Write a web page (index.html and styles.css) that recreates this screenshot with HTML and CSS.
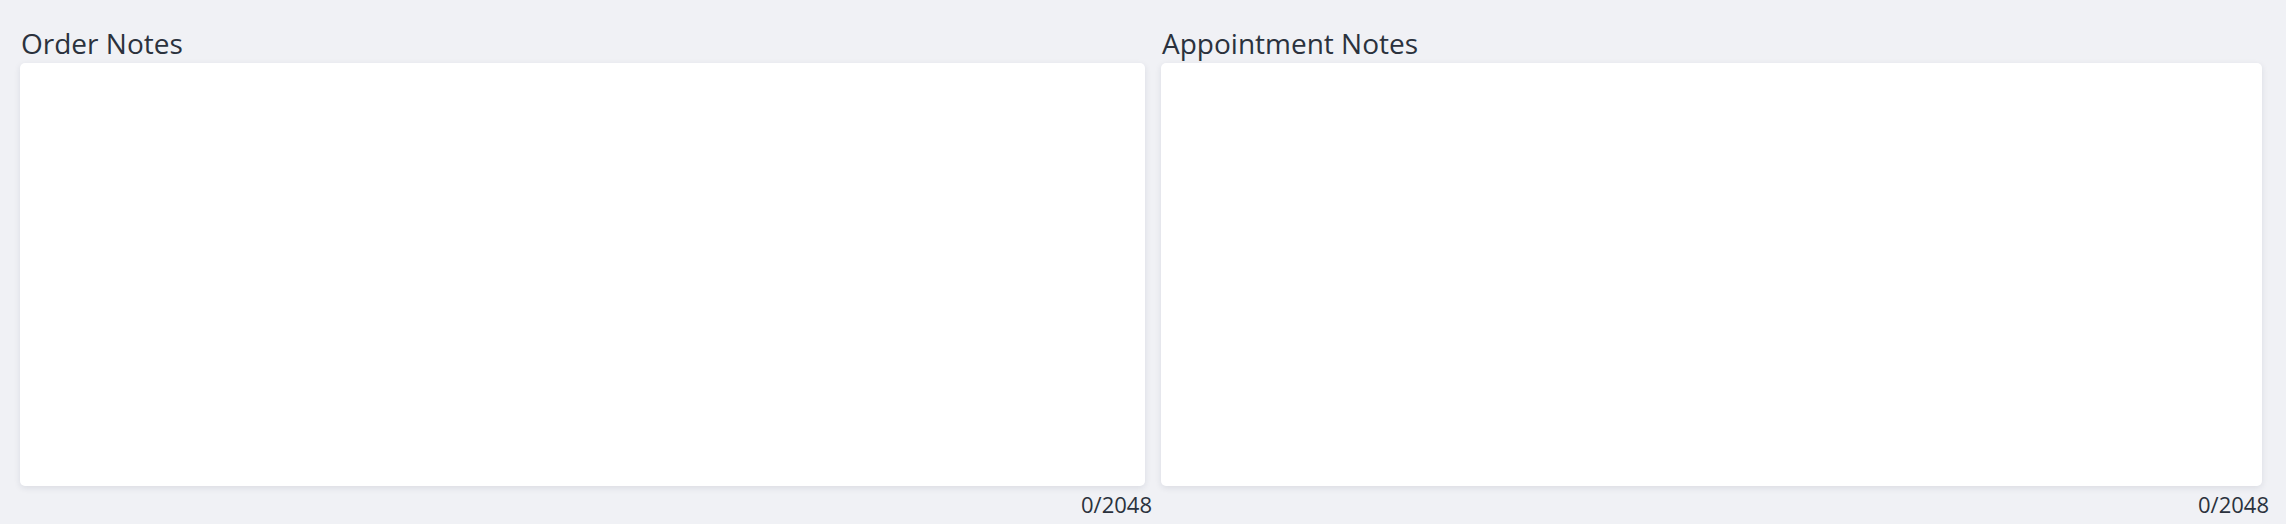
FILE: index.html
```html
<!DOCTYPE html>
<html>
<head>
<meta charset="utf-8">
<link rel="stylesheet" href="styles.css">
</head>
<body>
<div class="page">
  <div class="field field-left">
    <label class="label">Order Notes</label>
    <textarea class="box"></textarea>
    <div class="counter">0/2048</div>
  </div>
  <div class="field field-right">
    <label class="label">Appointment Notes</label>
    <textarea class="box"></textarea>
    <div class="counter">0/2048</div>
  </div>
</div>
</body>
</html>
```
FILE: styles.css
```css
html, body {
  margin: 0;
  padding: 0;
  background: #f0f1f5;
  font-family: "Open Sans", "Noto Sans", sans-serif;
  color: #2b323d;
  overflow: hidden;
}
.page {
  display: grid;
  grid-template-columns: 1132px 1108px;
  column-gap: 9px;
  padding: 24px 0 0 20px;
}
.field {
  display: flex;
  flex-direction: column;
}
.label {
  display: block;
  font-size: 28px;
  line-height: 39px;
  height: 39px;
  margin-left: 1px;
}
.box {
  display: block;
  width: calc(100% - 7px);
  height: 423px;
  box-sizing: border-box;
  border: none;
  border-radius: 5px;
  background: #ffffff;
  box-shadow: 0 2px 6px rgba(30, 40, 70, 0.10);
  resize: none;
  outline: none;
  margin: 0;
}
.counter {
  text-align: right;
  font-size: 22px;
  line-height: 28px;
  margin-top: 4px;
}
```
